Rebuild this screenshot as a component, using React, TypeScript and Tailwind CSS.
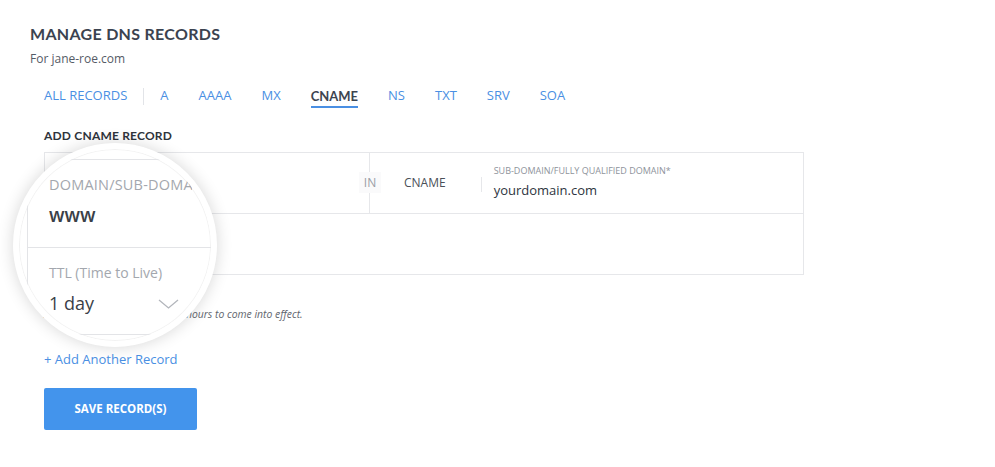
import React from "react";

const tabs = ["A", "AAAA", "MX", "CNAME", "NS", "TXT", "SRV", "SOA"];

export default function App() {
  return (
    <div className="relative w-[995px] h-[467px] bg-white overflow-hidden font-['Open_Sans',sans-serif]">
      <div className="pl-[30px] pt-[24px]">
        <h1 className="font-['Lato',sans-serif] font-bold text-[16px] leading-[20px] tracking-[0.3px] text-[#3b4350]">
          MANAGE DNS RECORDS
        </h1>
        <p className="mt-[7px] text-[12px] leading-[16px] text-[#555b66]">For jane-roe.com</p>

        <div className="ml-[14px] mt-[17px] flex items-center h-[24px]">
          <span className="text-[13px] text-[#4a8fe3]">ALL RECORDS</span>
          <div className="mx-[16px] w-px h-[17px] bg-[#e2e4e8]" />
          <div className="flex items-center gap-[30px]">
            {tabs.map((t) =>
              t === "CNAME" ? (
                <span
                  key={t}
                  className="font-['Lato',sans-serif] font-bold text-[13px] leading-[20px] text-[#3d4450] border-b-2 border-[#4a8fe3] pt-[2px]"
                >
                  {t}
                </span>
              ) : (
                <span key={t} className="text-[13px] text-[#4a8fe3]">
                  {t}
                </span>
              )
            )}
          </div>
        </div>

        <div className="ml-[14px] mt-[20px]">
          <h2 className="font-['Lato',sans-serif] font-bold text-[12px] leading-[16px] tracking-[0.2px] text-[#2f343c]">
            ADD CNAME RECORD
          </h2>

          <div className="mt-[8px] w-[760px] border border-[#e6e7ea]">
            <div className="flex h-[61px] border-b border-[#e6e7ea]">
              <div className="w-[325px] border-r border-[#e6e7ea] pl-[13px] pt-[14px]">
                <div className="text-[9px] text-[#a3a7ae]">DOMAIN/SUB-DOMAIN</div>
                <div className="text-[13px] font-semibold text-[#3a3f47]">www</div>
              </div>
              <div className="relative flex items-center">
                <span className="absolute left-[-11px] top-[19px] w-[22px] h-[21px] bg-[#fafafb] text-[12px] text-[#9a9ea5] flex items-center justify-center">
                  IN
                </span>
                <span className="ml-[34px] text-[12px] text-[#4a4f58]">CNAME</span>
                <div className="ml-[35px] w-px h-[15px] bg-[#e6e7ea] mt-[2px]" />
                <div className="ml-[12px] mt-[-4px]">
                  <div className="text-[9px] leading-[12px] text-[#8e939b]">SUB-DOMAIN/FULLY QUALIFIED DOMAIN*</div>
                  <div className="mt-[5px] text-[13px] leading-[16px] font-medium text-[#2d3440]">yourdomain.com</div>
                </div>
              </div>
            </div>
            <div className="h-[60px] pl-[13px] pt-[14px]">
              <div className="text-[9px] text-[#a3a7ae]">TTL (Time to Live)</div>
              <div className="text-[13px] text-[#3a3f47]">1 day</div>
            </div>
          </div>

          <p className="mt-[32px] text-[10.4px] leading-[14px] italic text-[#62666e]">
            Any changes can take up to 48 hours to come into effect.
          </p>

          <div className="mt-[29px] text-[13px] leading-[18px] text-[#4a8fe3]">+ Add Another Record</div>

          <button className="mt-[20px] w-[153px] h-[42px] rounded-[2px] bg-[#4394ec] text-white text-[11.5px] font-bold">
            SAVE RECORD(S)
          </button>
        </div>
      </div>

      {/* magnifier lens */}
      <div className="absolute left-[13px] top-[143px] w-[204px] h-[204px] rounded-full bg-white border-[6px] border-white overflow-hidden shadow-[0_0_16px_rgba(0,0,0,0.16),inset_0_0_0_1px_rgba(0,0,0,0.05)]">
        <div className="ml-[8px] mt-[10px] w-[220px] border-l border-t border-[#e3e4e7]">
          <div className="h-[88px] border-b border-[#e3e4e7] pl-[21px] pt-[16px]">
            <div className="w-[143px] overflow-hidden whitespace-nowrap text-[14.5px] tracking-[0.2px] leading-[18px] text-[#a3a7ae]">
              DOMAIN/SUB-DOMAIN
            </div>
            <div className="mt-[9px] text-[19px] leading-[24px] font-semibold text-[#3a3f47]">www</div>
          </div>
          <div className="h-[87px] border-b border-[#e3e4e7] pl-[21px] pt-[16px] relative">
            <div className="text-[14px] leading-[18px] text-[#a3a7ae]">TTL (Time to Live)</div>
            <div className="mt-[8px] flex items-center">
              <span className="text-[18px] leading-[26px] text-[#3a3f48]">1 day</span>
              <svg className="ml-[64px] mt-[2px]" width="21" height="10" viewBox="0 0 21 10">
                <polyline points="1,1 10.5,9 20,1" fill="none" stroke="#b3b6bc" strokeWidth="1.3" />
              </svg>
            </div>
          </div>
        </div>
      </div>
    </div>
  );
}
